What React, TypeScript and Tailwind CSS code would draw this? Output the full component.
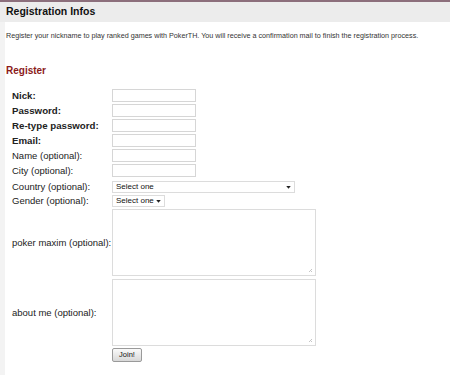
const font = { fontFamily: '"Liberation Sans", Arial, sans-serif' };

type Row = { label: string; bold?: boolean; kind: 'input' | 'country' | 'gender' | 'textarea' };

const rows: Row[] = [
  { label: 'Nick:', bold: true, kind: 'input' },
  { label: 'Password:', bold: true, kind: 'input' },
  { label: 'Re-type password:', bold: true, kind: 'input' },
  { label: 'Email:', bold: true, kind: 'input' },
  { label: 'Name (optional):', kind: 'input' },
  { label: 'City (optional):', kind: 'input' },
  { label: 'Country (optional):', kind: 'country' },
  { label: 'Gender (optional):', kind: 'gender' },
  { label: 'poker maxim (optional):', kind: 'textarea' },
  { label: 'about me (optional):', kind: 'textarea' },
];

const FakeSelect = ({ width }: { width: string }) => (
  <div
    className={`${width} h-[12px] flex items-center justify-between border border-[#dcdcdc] bg-white pl-[3px] pr-[3px] text-[8px] leading-none text-[#111]`}
  >
    <span>Select one</span>
    <svg width="5" height="3" viewBox="0 0 6 4">
      <path d="M0 0 L6 0 L3 3.5 Z" fill="#222" />
    </svg>
  </div>
);

const Field = ({ kind }: { kind: Row['kind'] }) => {
  if (kind === 'input') return <div className="w-[84px] h-[13px] border border-[#d6d6d6] bg-white" />;
  if (kind === 'country') return <FakeSelect width="w-[183px]" />;
  if (kind === 'gender') return <FakeSelect width="w-[53px]" />;
  return (
    <div className="relative w-[204px] h-[67px] border border-[#dcdcdc] bg-white">
      <svg className="absolute right-[2px] bottom-[2px]" width="5" height="5" viewBox="0 0 5 5">
        <path d="M4 1 L1 4 M4 3 L3 4" stroke="#b8b8b8" strokeWidth="0.8" />
      </svg>
    </div>
  );
};

export default function App() {
  return (
    <div className="w-[450px] h-[375px] bg-white overflow-hidden text-[#222]" style={font}>
      <div className="h-[2px] bg-[#8c6f7c]" />
      {/* header */}
      <div className="h-[20px] bg-[#ececec] flex items-center pl-[6px]">
        <h1 className="text-[10.5px] font-bold text-[#111]">Registration Infos</h1>
      </div>

      <div className="flex h-[353px]">
        <div className="w-[5px] bg-[#f3f3f3]" />
        <div className="flex-1 pl-[1px]">
          <p className="mt-[10px] text-[7.2px] text-[#333] leading-[8px] whitespace-nowrap">
            Register your nickname to play ranked games with PokerTH. You will receive a confirmation mail to finish the registration process.
          </p>

          <h2 className="mt-[25px] text-[10px] font-bold text-[#8b1a1a] leading-[12px]">Register</h2>

          <div className="mt-[12px] pl-[6px] flex flex-col">
            {rows.map((r, i) => (
              <div
                key={r.label}
                className={`flex items-center ${i === 0 ? '' : r.kind === 'country' ? 'mt-[4px]' : r.kind === 'textarea' && i === 9 ? 'mt-[3px]' : 'mt-[2px]'}`}
              >
                <span className={`w-[100px] leading-none ${r.bold ? 'font-bold text-[9.7px]' : 'text-[9.5px]'} text-[#222]`}>
                  {r.label}
                </span>
                <Field kind={r.kind} />
              </div>
            ))}
            <div className="flex mt-[2px]">
              <div className="w-[100px]" />
              <button className="w-[30px] h-[14px] rounded-[2px] border border-[#9a9a9a] bg-gradient-to-b from-[#fafafa] to-[#d8d8d8] text-[7.5px] text-[#111] leading-none">
                Join!
              </button>
            </div>
          </div>
        </div>
      </div>
    </div>
  );
}
